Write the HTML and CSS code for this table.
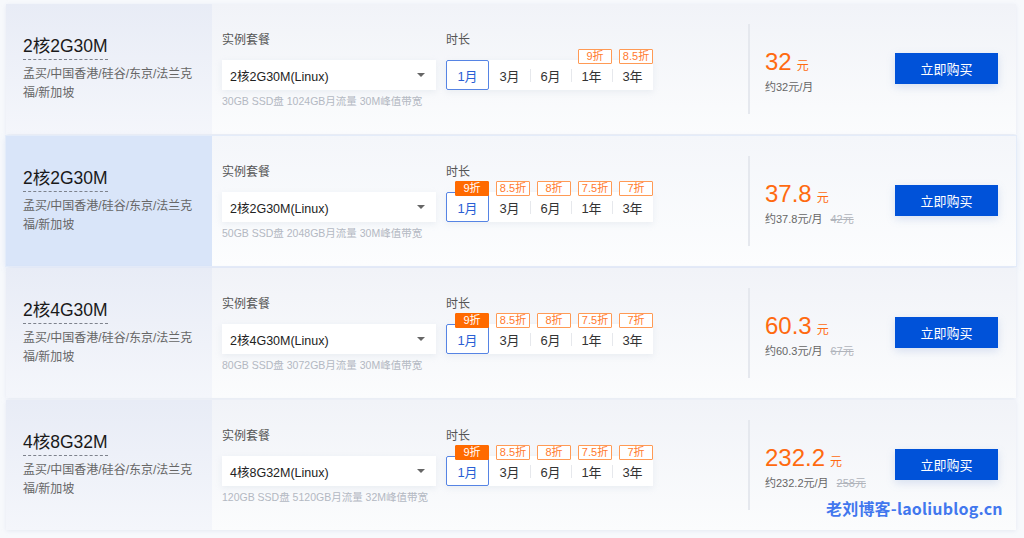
FILE: index.html
```html
<!DOCTYPE html>
<html lang="zh-CN">
<head>
<meta charset="utf-8">
<title>套餐</title>
<link rel="stylesheet" href="styles.css">
</head>
<body>
<div class="list">

  <div class="card">
    <div class="side">
      <div class="title">2核2G30M</div>
      <div class="regions">孟买/中国香港/硅谷/东京/法兰克福/新加坡</div>
    </div>
    <div class="config">
      <div class="field spec">
        <div class="label">实例套餐</div>
        <div class="select"><span>2核2G30M(Linux)</span><i class="caret"></i></div>
        <div class="desc">30GB SSD盘 1024GB月流量 30M峰值带宽</div>
      </div>
      <div class="field dur">
        <div class="label">时长</div>
        <div class="periods">
          <div class="period active">1月</div>
          <div class="period">3月</div>
          <div class="period">6月</div>
          <div class="period"><span class="tag">9折</span>1年</div>
          <div class="period"><span class="tag">8.5折</span>3年</div>
        </div>
      </div>
    </div>
    <div class="buy">
      <div class="price">
        <div class="amount">32<span class="unit">元</span></div>
        <div class="monthly">约32元/月</div>
      </div>
      <button class="btn">立即购买</button>
    </div>
  </div>

  <div class="card hot">
    <div class="side">
      <div class="title">2核2G30M</div>
      <div class="regions">孟买/中国香港/硅谷/东京/法兰克福/新加坡</div>
    </div>
    <div class="config">
      <div class="field spec">
        <div class="label">实例套餐</div>
        <div class="select"><span>2核2G30M(Linux)</span><i class="caret"></i></div>
        <div class="desc">50GB SSD盘 2048GB月流量 30M峰值带宽</div>
      </div>
      <div class="field dur">
        <div class="label">时长</div>
        <div class="periods">
          <div class="period active"><span class="tag fill">9折</span>1月</div>
          <div class="period"><span class="tag">8.5折</span>3月</div>
          <div class="period"><span class="tag">8折</span>6月</div>
          <div class="period"><span class="tag">7.5折</span>1年</div>
          <div class="period"><span class="tag">7折</span>3年</div>
        </div>
      </div>
    </div>
    <div class="buy">
      <div class="price">
        <div class="amount">37.8<span class="unit">元</span></div>
        <div class="monthly">约37.8元/月<s class="orig">42元</s></div>
      </div>
      <button class="btn">立即购买</button>
    </div>
  </div>

  <div class="card">
    <div class="side">
      <div class="title">2核4G30M</div>
      <div class="regions">孟买/中国香港/硅谷/东京/法兰克福/新加坡</div>
    </div>
    <div class="config">
      <div class="field spec">
        <div class="label">实例套餐</div>
        <div class="select"><span>2核4G30M(Linux)</span><i class="caret"></i></div>
        <div class="desc">80GB SSD盘 3072GB月流量 30M峰值带宽</div>
      </div>
      <div class="field dur">
        <div class="label">时长</div>
        <div class="periods">
          <div class="period active"><span class="tag fill">9折</span>1月</div>
          <div class="period"><span class="tag">8.5折</span>3月</div>
          <div class="period"><span class="tag">8折</span>6月</div>
          <div class="period"><span class="tag">7.5折</span>1年</div>
          <div class="period"><span class="tag">7折</span>3年</div>
        </div>
      </div>
    </div>
    <div class="buy">
      <div class="price">
        <div class="amount">60.3<span class="unit">元</span></div>
        <div class="monthly">约60.3元/月<s class="orig">67元</s></div>
      </div>
      <button class="btn">立即购买</button>
    </div>
  </div>

  <div class="card">
    <div class="side">
      <div class="title">4核8G32M</div>
      <div class="regions">孟买/中国香港/硅谷/东京/法兰克福/新加坡</div>
    </div>
    <div class="config">
      <div class="field spec">
        <div class="label">实例套餐</div>
        <div class="select"><span>4核8G32M(Linux)</span><i class="caret"></i></div>
        <div class="desc">120GB SSD盘 5120GB月流量 32M峰值带宽</div>
      </div>
      <div class="field dur">
        <div class="label">时长</div>
        <div class="periods">
          <div class="period active"><span class="tag fill">9折</span>1月</div>
          <div class="period"><span class="tag">8.5折</span>3月</div>
          <div class="period"><span class="tag">8折</span>6月</div>
          <div class="period"><span class="tag">7.5折</span>1年</div>
          <div class="period"><span class="tag">7折</span>3年</div>
        </div>
      </div>
    </div>
    <div class="buy">
      <div class="price">
        <div class="amount">232.2<span class="unit">元</span></div>
        <div class="monthly">约232.2元/月<s class="orig">258元</s></div>
      </div>
      <button class="btn">立即购买</button>
    </div>
  </div>

</div>
<div class="watermark">老刘博客-laoliublog.cn</div>
</body>
</html>
```

FILE: styles.css
```css
* { box-sizing: border-box; }

html, body {
  margin: 0;
  height: 100%;
}

body {
  background: #f7f9fc;
  font-family: "Liberation Sans", "Noto Sans CJK SC", sans-serif;
  color: #333;
  position: relative;
  overflow: hidden;
}

.list {
  display: flex;
  flex-direction: column;
  gap: 2px;
  padding: 4px 8px 0 6px;
}

.card {
  display: flex;
  height: 130px;
  background: linear-gradient(to bottom, #f1f3f8, #fbfcfd);
  box-shadow: 0 1px 4px rgba(200, 210, 228, 0.35);
}

.card.hot {
  background: linear-gradient(to bottom, #f4f6fa, #fcfdfe);
  box-shadow: 0 0 0 1px #e4ecf9, 0 2px 6px rgba(180, 200, 235, 0.45);
}

.side {
  width: 206px;
  flex: none;
  padding: 31px 17px 0 17px;
  background: linear-gradient(to bottom, #e8ecf6, #f4f6fb);
}

.hot .side {
  background: #d9e5f9;
}

.title {
  display: inline-block;
  font-size: 17.5px;
  line-height: 22px;
  color: #1a1a1a;
  padding-bottom: 2px;
  border-bottom: 1px dashed #7d828c;
}

.regions {
  margin-top: 5px;
  font-size: 12px;
  line-height: 19px;
  color: #666;
}

.config {
  display: flex;
  gap: 10px;
  padding: 27px 0 0 10px;
  width: 536px;
  flex: none;
}

.label {
  font-size: 12px;
  line-height: 18px;
  color: #555;
  margin-bottom: 11px;
}

.spec { width: 214px; }
.dur { width: 207px; }

.select {
  height: 30px;
  background: #fff;
  display: flex;
  align-items: center;
  justify-content: space-between;
  padding: 0 11px 0 8px;
  font-size: 12.5px;
  color: #222;
  box-shadow: 0 2px 6px rgba(200, 208, 222, 0.3);
}

.caret {
  width: 0;
  height: 0;
  border-left: 4px solid transparent;
  border-right: 4px solid transparent;
  border-top: 4px solid #666;
}

.desc {
  margin-top: 3px;
  font-size: 10.5px;
  line-height: 16px;
  color: #b3b8c2;
  white-space: nowrap;
}

.periods {
  display: flex;
  height: 30px;
  background: #fff;
  box-shadow: 0 2px 6px rgba(200, 208, 222, 0.3);
}

.period {
  position: relative;
  flex: 1;
  display: flex;
  align-items: center;
  justify-content: center;
  font-size: 13px;
  color: #333;
}

.period + .period::before {
  content: "";
  position: absolute;
  left: 0;
  top: 9px;
  height: 13px;
  width: 1px;
  background: #e6e8ec;
}

.period.active {
  border: 1px solid #5684e4;
  border-radius: 2px;
  color: #2a5fd4;
}

.period.active + .period::before { display: none; }

.tag {
  position: absolute;
  right: 0;
  top: -11px;
  width: 34px;
  height: 15px;
  border: 1px solid #ff9a55;
  background: #fff;
  color: #ff7a2e;
  font-size: 11px;
  line-height: 13px;
  text-align: center;
  border-radius: 1px;
}

.period.active .tag {
  right: -1px;
  top: -12px;
}

.tag.fill {
  background: #ff6a00;
  border-color: #ff6a00;
  color: #fff;
}

.buy {
  flex: 1;
  display: flex;
  align-items: center;
  justify-content: space-between;
  margin: 20px 0;
  padding: 0 18px 0 15px;
  border-left: 2px solid #e5e8ee;
}

.price {
  margin-top: 4px;
}

.amount {
  font-size: 24px;
  line-height: 28px;
  color: #ff6a10;
}

.unit {
  font-size: 12px;
  margin-left: 5px;
}

.monthly {
  margin-top: 0;
  font-size: 11px;
  line-height: 14px;
  color: #666;
}

.orig {
  margin-left: 8px;
  color: #b0b4bb;
}

.btn {
  width: 103px;
  height: 31px;
  border: 0;
  background: #0052d9;
  color: #fff;
  font-family: "Liberation Sans", "Noto Sans CJK SC", sans-serif;
  font-size: 13px;
  box-shadow: 0 3px 8px rgba(120, 150, 210, 0.25);
  margin-top: -2px;
}

.watermark {
  position: absolute;
  left: 826px;
  top: 498px;
  font-family: "Noto Sans CJK SC", "Liberation Sans", sans-serif;
  font-weight: 700;
  font-size: 16px;
  line-height: 20px;
  color: #4177ee;
  letter-spacing: 0.2px;
}
```
